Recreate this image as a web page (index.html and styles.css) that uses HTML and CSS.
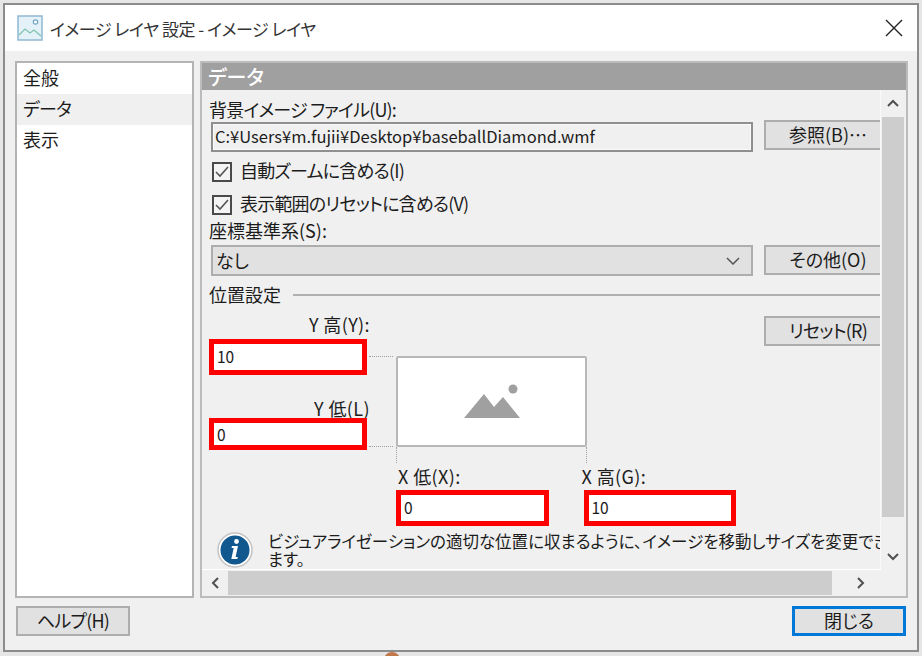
FILE: index.html
```html
<!DOCTYPE html>
<html lang="ja">
<head>
<meta charset="utf-8">
<title>イメージ レイヤ 設定</title>
<link rel="stylesheet" href="styles.css">
</head>
<body>
<div class="window">
  <header class="titlebar">
    <svg class="title-icon" width="26" height="26" viewBox="0 0 26 26">
      <rect x="1" y="1" width="24" height="24" fill="#e4f1f8" stroke="#8fb8cf" stroke-width="1.5"/>
      <circle cx="18.5" cy="7" r="2.2" fill="#fff" stroke="#6fa6c4" stroke-width="1.2"/>
      <path d="M2 20l6-6 5 4 4-3 7 6" fill="none" stroke="#7fc4b0" stroke-width="1.3"/>
    </svg>
    <span class="title-text">イメージ レイヤ 設定 - イメージ レイヤ</span>
    <svg class="close" width="18" height="18" viewBox="0 0 18 18"><path d="M1 1l16 16M17 1L1 17" stroke="#222" stroke-width="1.4" fill="none"/></svg>
  </header>
  <div class="main">
    <nav class="sidelist">
      <div class="side-item">全般</div>
      <div class="side-item selected tight">データ</div>
      <div class="side-item">表示</div>
    </nav>
    <section class="panel">
      <div class="panel-head">データ</div>
      <div class="panel-body">
        <div class="viewport">
          <div class="form">
            <div class="label tight">背景イメージ ファイル(U):</div>
            <div class="row">
              <div class="field readonly">C:¥Users¥m.fujii¥Desktop¥baseballDiamond.wmf</div>
              <div class="btn btn-cut">参照(B)…</div>
            </div>
            <div class="check check-1 tight"><span class="box"><svg width="14" height="12" viewBox="0 0 14 12"><path d="M1 6l4 4 8-9" fill="none" stroke="#555" stroke-width="1.6"/></svg></span>自動ズームに含める(I)</div>
            <div class="check check-2 tight"><span class="box"><svg width="14" height="12" viewBox="0 0 14 12"><path d="M1 6l4 4 8-9" fill="none" stroke="#555" stroke-width="1.6"/></svg></span>表示範囲のリセットに含める(V)</div>
            <div class="label label-crs">座標基準系(S):</div>
            <div class="row">
              <div class="field select">なし<svg class="caret" width="14" height="8" viewBox="0 0 14 8"><path d="M1 1l6 6 6-6" fill="none" stroke="#555" stroke-width="1.5"/></svg></div>
              <div class="btn btn-cut">その他(O)</div>
            </div>
            <div class="legend"><span class="legend-text">位置設定</span><i class="legend-line"></i></div>
            <div class="diagram">
              <div class="ycol">
                <div class="dlabel y-top">Y 高(Y):</div>
                <div class="red red-y1">10</div>
                <div class="dlabel y-low">Y 低(L)</div>
                <div class="red red-y2">0</div>
              </div>
              <div class="connect"><i></i><i></i></div>
              <div class="xcol">
                <div class="picture">
                  <svg width="58" height="38" viewBox="0 0 58 38"><circle cx="50" cy="6" r="4.500" fill="#a0a0a0"/><path d="M1 35L21 11l10 13 9-10 17 21z" fill="#a0a0a0"/></svg>
                </div>
                <div class="ticks"></div>
                <div class="xrow">
                  <div class="xitem"><div class="dlabel x-label">X 低(X):</div><div class="red red-x">0</div></div>
                  <div class="xitem xitem-high"><div class="dlabel x-label">X 高(G):</div><div class="red red-x">10</div></div>
                </div>
              </div>
              <div class="btn btn-cut btn-reset tight">リセット(R)</div>
            </div>
            <div class="note">
              <svg class="info" width="36" height="36" viewBox="0 0 36 36">
                <circle cx="18" cy="18" r="17" fill="#fff" stroke="#c4c4c4" stroke-width="1.5"/>
                <circle cx="18" cy="18" r="14.5" fill="#11588f"/>
                <circle cx="19.5" cy="9.5" r="2.4" fill="#fff"/>
                <path d="M15 14h6l-2.400 11h2.200l-.5 2h-6l2.400-11h-2.200z" fill="#fff"/>
              </svg>
              <p>ビジュアライゼーションの適切な位置に収まるように、イメージを移動しサイズを変更でき<br>ます。<br>イメージをドラッグするか、上のボックスの値を編集して調整します。</p>
            </div>
          </div>
        </div>
        <div class="vscroll">
          <svg class="sb-arrow" width="12" height="8" viewBox="0 0 12 8"><path d="M1 7l5-5 5 5" fill="none" stroke="#505050" stroke-width="2"/></svg>
          <div class="vthumb"></div>
          <svg class="sb-arrow" width="12" height="8" viewBox="0 0 12 8"><path d="M1 1l5 5 5-5" fill="none" stroke="#505050" stroke-width="2"/></svg>
        </div>
        <div class="hscroll">
          <svg class="sb-arrow-h" width="8" height="12" viewBox="0 0 8 12"><path d="M7 1L2 6l5 5" fill="none" stroke="#505050" stroke-width="2"/></svg>
          <div class="hthumb"></div>
          <svg class="sb-arrow-h" width="8" height="12" viewBox="0 0 8 12"><path d="M1 1l5 5-5 5" fill="none" stroke="#505050" stroke-width="2"/></svg>
        </div>
      </div>
    </section>
  </div>
  <footer class="footer">
    <div class="btn btn-foot tight">ヘルプ(H)</div>
    <div class="btn btn-foot btn-primary">閉じる</div>
  </footer>
</div>
<div class="peek"></div>
</body>
</html>
```

FILE: styles.css
```css
* { box-sizing: border-box; }
html, body { margin: 0; height: 656px; overflow: hidden; }
body {
  position: relative;
  padding: 3px 3px 4px;
  background: #e6e6e6;
  font-family: "Noto Sans CJK JP", "Noto Sans", sans-serif;
  font-size: 18px;
  font-feature-settings: "palt";
  color: #1c1c1c;
}
.tight { letter-spacing: -0.8px; }
.window {
  height: 649px;
  border: 2px solid #8c8c8c;
  background: #f0f0f0;
  display: flex;
  flex-direction: column;
}
.titlebar {
  height: 46px;
  flex: none;
  background: #fff;
  display: flex;
  align-items: center;
  padding: 0 14px 0 12px;
}
.title-icon { flex: none; margin-right: 7px; }
.title-text { font-size: 17px; letter-spacing: -0.45px; color: #333; }
.close { margin-left: auto; }
.main {
  height: 547px;
  flex: none;
  display: flex;
  gap: 6px;
  padding: 10px 0 0 10px;
}
.sidelist {
  width: 179px;
  background: #fff;
  border: 2px solid #b4b4b4;
}
.side-item { height: 31px; line-height: 28px; padding-left: 6px; }
.selected { background: #f0f0f0; }
.panel {
  width: 708px;
  border: 2px solid #bcbcbc;
  display: flex;
  flex-direction: column;
}
.panel-head {
  height: 27px;
  flex: none;
  background: #a0a0a0;
  color: #fff;
  font-size: 20px;
  font-weight: 500;
  line-height: 27px;
  padding-left: 6px;
}
.panel-body {
  flex: 1;
  min-height: 0;
  display: grid;
  grid-template-columns: 679px 24px;
  grid-template-rows: 480px 26px;
}
.viewport {
  overflow: hidden;
  min-width: 0;
  border-bottom: 1px solid #fff;
  border-right: 1px solid #fafafa;
}
.form { width: 900px; padding: 10px 0 0 7px; }
.label { height: 20px; line-height: 18px; white-space: nowrap; }
.row { display: flex; gap: 11px; padding-left: 2px; align-items: flex-start; }
.field {
  width: 542px;
  flex: none;
  white-space: nowrap;
}
.readonly {
  height: 30px;
  line-height: 25px;
  padding-left: 2px;
  background: #f0f0f0;
  border: 2px solid #8f8f8f;
  box-shadow: inset 0 0 0 1px #fafafa;
  font-size: 16.5px;
  margin-top: 2px;
}
.select {
  height: 31px;
  line-height: 27px;
  padding: 0 11px 0 3px;
  background: #e1e1e1;
  border: 2px solid #adadad;
  display: flex;
  justify-content: space-between;
  align-items: center;
}
.btn {
  height: 30px;
  line-height: 24px;
  background: #e1e1e1;
  border: 2px solid #adadad;
  text-align: center;
  flex: none;
}
.btn-cut { width: 130px; padding-right: 2px; }
.check {
  display: flex;
  align-items: flex-start;
  height: 20px;
  padding-left: 3px;
  line-height: 16px;
  white-space: nowrap;
}
.check-1 { margin-top: 10px; }
.check-2 { margin-top: 13px; }
.box {
  width: 20px;
  height: 20px;
  flex: none;
  margin-right: 8px;
  border: 2px solid #4a4a4a;
  background: #f4f4f4;
  display: flex;
  align-items: center;
  justify-content: center;
}
.label-crs { margin-top: 6px; margin-bottom: 4px; }
.legend {
  display: flex;
  align-items: center;
  gap: 12px;
  height: 20px;
  margin-top: 9px;
}
.legend-text { line-height: 18px; padding-bottom: 2px; }
.legend-line { width: 600px; height: 2px; background: #b0b0b0; flex: none; }
.diagram { display: flex; margin-top: 11px; align-items: flex-start; }
.ycol { width: 158px; flex: none; display: flex; flex-direction: column; }
.dlabel { height: 20px; line-height: 20px; white-space: nowrap; letter-spacing: 0.4px; }
.y-top { text-align: right; margin-right: -3px; height: 23px; line-height: 16px; }
.y-low { text-align: right; margin-right: -3px; margin-top: 23px; }
.red {
  height: 36px;
  border: 5px solid #ff0000;
  background: #fff;
  padding-left: 3px;
  line-height: 24px;
  font-size: 15.5px;
}
.red-y2 { height: 32px; line-height: 22px; }
.connect {
  width: 29px;
  height: 91px;
  flex: none;
  margin-top: 40px;
  padding: 0 3px 0 2px;
  display: flex;
  flex-direction: column;
  justify-content: space-between;
}
.connect i, .ticks { border: 0 dotted #a0a0a0; }
.connect i { display: block; border-top-width: 1px; }
.xcol { width: 340px; flex: none; padding-top: 40px; }
.picture {
  width: 191px;
  height: 91px;
  background: #fff;
  border: 2px solid #b8b8b8;
  border-radius: 2px;
  display: flex;
  align-items: center;
  justify-content: center;
}
.ticks { width: 191px; height: 16px; border-left-width: 1px; border-right-width: 1px; }
.xrow { display: flex; gap: 35px; }
.xitem { width: 153px; }
.x-label { height: 27px; line-height: 26px; padding-left: 2px; }
.xitem-high .x-label { padding-left: 0; margin-left: -2px; }
.btn-reset { margin-left: 28px; }
.note {
  display: flex;
  gap: 15px;
  margin: 6px 0 0 8px;
}
.info { flex: none; }
.note p {
  margin: 0;
  white-space: nowrap;
  line-height: 18px;
  font-size: 16.5px;
}
.vscroll {
  background: #f0f0f0;
  display: flex;
  flex-direction: column;
  align-items: center;
}
.sb-arrow { margin: 8px 0; flex: none; }
.vthumb { width: 22px; height: 400px; background: #cdcdcd; margin-bottom: 28px; }
.vscroll .sb-arrow:first-child { margin: 9px 0 10px; }
.hscroll {
  display: flex;
  align-items: center;
  background: #f0f0f0;
}
.sb-arrow-h { flex: none; margin: 0 9px; }
.hthumb { width: 604px; height: 24px; background: #cdcdcd; margin-right: 16px; }
.footer {
  flex: 1;
  display: flex;
  justify-content: space-between;
  padding: 8px 11px 0 11px;
  align-items: flex-start;
}
.btn-foot { width: 114px; }
.btn-primary { border: 3px solid #0078d7; line-height: 22px; }
.peek {
  position: absolute;
  left: 384px;
  top: 652px;
  width: 16px;
  height: 16px;
  border-radius: 50%;
  background: #c0784a;
}
```
